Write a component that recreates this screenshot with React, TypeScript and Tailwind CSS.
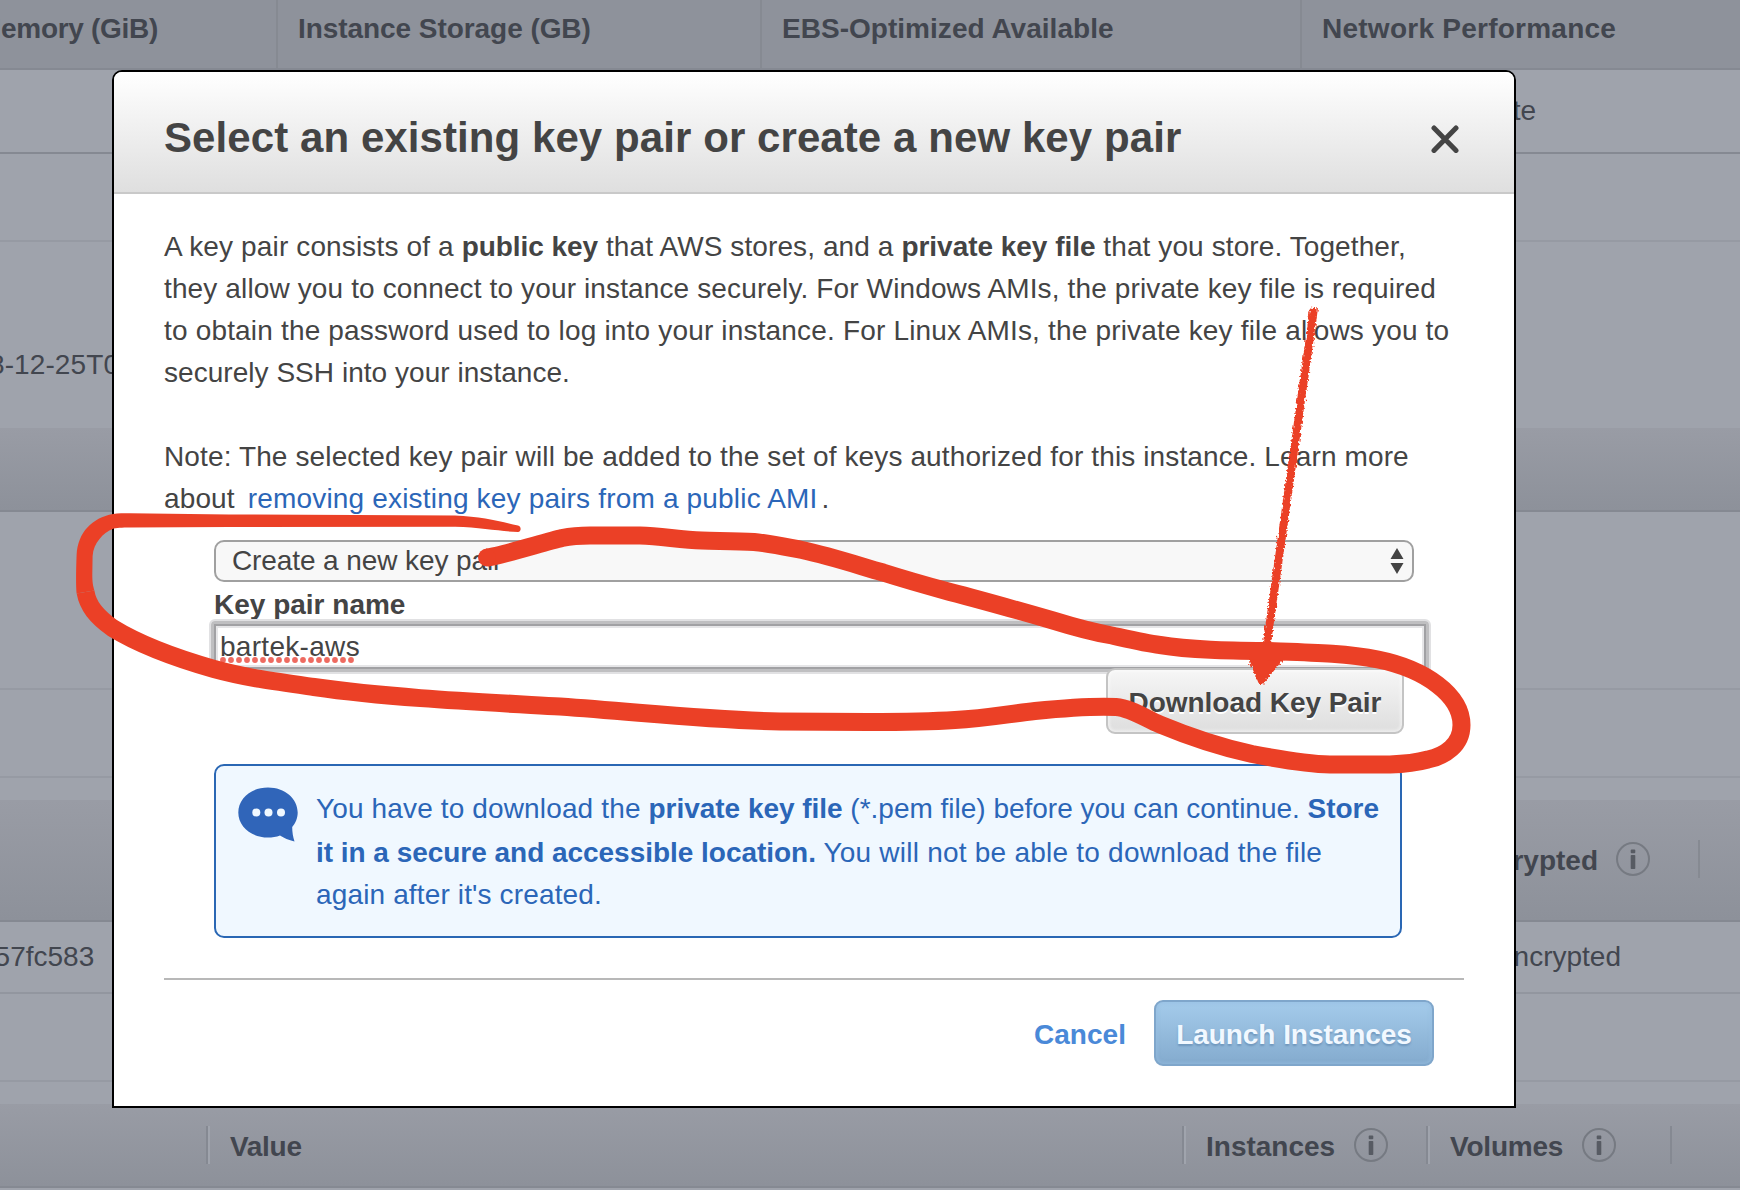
import type { ReactNode } from "react";

function InfoIcon() {
  return (
    <svg viewBox="0 0 36 36" className="h-9 w-9 shrink-0">
      <circle cx="18" cy="18" r="16" fill="none" stroke="#767a82" strokeWidth="2" />
      <rect x="15.7" y="8.5" width="4.6" height="3.8" rx="1" fill="#575b63" />
      <rect x="15.7" y="14" width="4.6" height="14" rx="0.8" fill="#575b63" />
    </svg>
  );
}

function Band({ className, children }: { className: string; children?: ReactNode }) {
  return (
    <div
      className={`flex shrink-0 border-b-2 border-[#858992] bg-linear-to-b from-[#999ca5] to-[#8d919a] font-bold ${className}`}
    >
      {children}
    </div>
  );
}

function Row({ className, children }: { className: string; children?: ReactNode }) {
  return <div className={`flex shrink-0 justify-between border-b-2 ${className}`}>{children}</div>;
}

function ReviewPage() {
  return (
    <div className="flex h-full flex-col whitespace-pre bg-[#9fa3ac] text-[#42464f]">
      <div className="flex h-[70px] shrink-0 border-b-2 border-[#858992] bg-[#8e929b] font-bold leading-[58px]">
        <div className="w-[278px] border-r-2 border-[#868a92]">
          <span className="-ml-[22px] tracking-[-0.3px]">Memory (GiB)</span>
        </div>
        <div className="w-[484px] border-r-2 border-[#868a92] pl-5 tracking-[-0.06px]">Instance Storage (GB)</div>
        <div className="w-[540px] border-r-2 border-[#868a92] pl-5 tracking-[0.03px]">EBS-Optimized Available</div>
        <div className="pl-5 tracking-[0.25px]">Network Performance</div>
      </div>
      <Row className="h-[84px] border-[#858992] leading-[81px]">
        <span />
        <span className="pr-[204px]">Moderate</span>
      </Row>
      <Row className="h-[88px] border-[#969aa3]" />
      <div className="h-[186px] shrink-0 pt-[103px] leading-[40px]">
        <span className="-ml-[11px] tracking-[0.1px]">8-12-25T0</span>
      </div>
      <Band className="h-[84px]" />
      <Row className="h-[178px] border-[#969aa3]" />
      <Row className="h-[88px] border-[#969aa3]" />
      <div className="h-[22px] shrink-0" />
      <Band className="h-[122px] items-center justify-end pb-[3px]">
        <span className="pt-1">Encrypted</span>
        <div className="ml-[17px] mr-[47px]">
          <InfoIcon />
        </div>
        <div className="mr-10 h-[38px] w-[2px] bg-[#868a92]" />
      </Band>
      <Row className="h-[72px] border-[#92969f] leading-[69px]">
        <span className="-ml-[21px]">557fc583</span>
        <span className="pr-[119px]">Not Encrypted</span>
      </Row>
      <Row className="h-[88px] border-[#969aa3]" />
      <div className="h-[22px] shrink-0" />
      <Band className="h-[84px] items-center pl-[206px]">
        <div className="h-[38px] w-1 border-l-2 border-r-2 border-l-[#858992] border-r-[#a0a4ad]" />
        <span className="w-[972px] pl-5 pt-[3px] tracking-[-0.3px]">Value</span>
        <div className="h-[38px] w-1 border-l-2 border-r-2 border-l-[#858992] border-r-[#a0a4ad]" />
        <div className="flex w-[240px] items-center pl-5">
          <span className="w-[147px] pt-[3px] tracking-[0px]">Instances</span>
          <InfoIcon />
        </div>
        <div className="h-[38px] w-1 border-l-2 border-r-2 border-l-[#858992] border-r-[#a0a4ad]" />
        <div className="flex w-[240px] items-center pl-5">
          <span className="w-[131px] pt-[3px] tracking-[-0.2px]">Volumes</span>
          <InfoIcon />
        </div>
        <div className="h-[38px] w-[2px] bg-[#858992]" />
      </Band>
    </div>
  );
}

function SpellingDots() {
  return (
    <svg viewBox="0 0 136 6" className="absolute left-0 top-[29px] h-[6px] w-[136px]">
      {Array.from({ length: 17 }, (_, i) => (
        <circle key={i} cx={3 + i * 8} cy="3" r="2.9" fill="#ee6a60" />
      ))}
    </svg>
  );
}

function KeyPairDialog() {
  return (
    <div className="absolute left-[112px] top-[70px] flex h-[1038px] w-[1404px] flex-col overflow-hidden whitespace-pre rounded-t-[10px] border-2 border-black bg-white text-[#444444]">
      <div className="flex h-[122px] shrink-0 items-center justify-between border-b-2 border-[#c9c9c9] bg-linear-to-b from-white to-[#dfdfdf] pl-[50px] pr-[55px]">
        <h1 className="pt-[11px] text-[42px] font-bold leading-[48px] tracking-[0.08px]">
          Select an existing key pair or create a new key pair
        </h1>
        <svg viewBox="0 0 28 28" className="mt-[53px] h-7 w-7 self-start">
          <path d="M3 3L25 25.5M25 3L3 25.5" stroke="#444444" strokeWidth="5" strokeLinecap="round" />
        </svg>
      </div>
      <div className="flex flex-col pl-[50px] pr-[50px] pt-8">
        <p className="h-[168px] leading-[42px] tracking-[0.1px]">
          <span className="tracking-[0.14px]">A key pair consists of a </span>
          <b className="tracking-[-0.05px]">public key</b> that AWS stores, and a{" "}
          <b className="tracking-[-0.03px]">private key file</b> that you store. Together,{"\n"}
          <span className="tracking-[0.13px]">
            they allow you to connect to your instance securely. For Windows AMIs, the private key file is required
          </span>
          {"\n"}
          <span className="tracking-[0.175px]">
            to obtain the password used to log into your instance. For Linux AMIs, the private key file allows you to
          </span>
          {"\n"}
          <span className="tracking-[0.04px]">securely SSH into your instance.</span>
        </p>
        <p className="mt-[42px] h-[84px] leading-[42px] tracking-[0.125px]">
          Note: The selected key pair will be added to the set of keys authorized for this instance. Learn more{"\n"}
          about<a className="ml-[13px] mr-1 tracking-[0.18px] text-[#2b66b8]">removing existing key pairs from a public AMI</a>.
        </p>
        <div className="flex flex-col pl-[50px] pt-5">
          <div className="flex h-[42px] w-[1200px] items-center justify-between rounded-[10px] border-2 border-[#a0a0a0] bg-[#f8f8f8] pl-4 pr-2">
            <span className="tracking-[-0.1px]">Create a new key pair</span>
            <svg viewBox="0 0 14 26" className="h-[26px] w-[14px]">
              <path d="M7 0L13.5 11H0.5ZM7 26L13.5 15H0.5Z" fill="#444444" />
            </svg>
          </div>
          <label className="h-[37px] pt-[5px] font-bold leading-[36px]">Key pair name</label>
          <div className="-ml-[5px] h-[55px] w-[1222px] rounded-[6px] border-2 border-[#e1e1e3] bg-white">
            <div className="h-[51px] rounded-[4px] border-[4px] border-[#bfbfc1]">
              <div className="-m-px h-[45px] border-2 border-[#a1a1a4]">
                <div className="h-[41px] border-2 border-[#e6e6e8] pl-[2px]">
                  <span className="relative block leading-[37px] tracking-[0.3px]">
                    bartek-aws
                    <SpellingDots />
                  </span>
                </div>
              </div>
            </div>
          </div>
          <button className="relative -mt-[6px] ml-[892px] h-[66px] w-[298px] rounded-[9px] border-2 border-[#c4c4c4] bg-linear-to-b from-[#f6f6f6] to-[#dedede] pt-[3px] text-center font-bold tracking-[-0.05px] shadow-[inset_0_0_3px_2px_rgba(255,255,255,0.45)] [text-shadow:0_2px_0_#ffffff]">
            Download Key Pair
          </button>
          <div className="mt-[30px] flex h-[174px] w-[1188px] rounded-[10px] border-2 border-[#2a67b4] bg-[#f0f8ff] pl-[22px] pt-[21px] text-[#2b66b8]">
            <svg viewBox="0 0 60 56" className="h-14 w-[60px]">
              <path
                d="M30 0.5C46.8 0.5 59.7 11.5 59.7 25.5C59.7 31 57.5 36.5 54.2 40C54.2 45 55 50 56.5 54.5C50.5 53 46 51 42 48.5C38.5 50 34 50.5 30 50.5C13.2 50.5 0.3 39.5 0.3 25.5C0.3 11.5 13.2 0.5 30 0.5Z"
                fill="#3065b9"
              />
              <circle cx="18.3" cy="25.5" r="4" fill="#f0f8ff" />
              <circle cx="30.5" cy="25.5" r="4" fill="#f0f8ff" />
              <circle cx="43" cy="25.5" r="4" fill="#f0f8ff" />
            </svg>
            <div className="pl-[18px] pt-px leading-[42px] tracking-[0.14px]">
              <p className="h-[44px]">
                You have to download the <b className="tracking-[-0.03px]">private key file</b>
                <span className="tracking-[-0.01px]"> (*.pem file) before you can continue. </span>
                <b className="tracking-[-0.05px]">Store</b>
              </p>
              <p>
                <b className="tracking-[-0.03px]">it in a secure and accessible location.</b>
                <span className="tracking-[0.23px]"> You will not be able to download the file</span>
              </p>
              <p>again after it's created.</p>
            </div>
          </div>
        </div>
        <div className="mt-10 flex items-start justify-end border-t-2 border-[#b8b8b8] pr-[30px] pt-5 font-bold">
          <a className="mr-7 mt-[17px] tracking-[0.05px] text-[#4a89d8]">Cancel</a>
          <button className="h-[66px] w-[280px] rounded-[9px] border-2 border-[#7fa6cb] bg-linear-to-b from-[#a4cbeb] to-[#84abce] pt-[3px] tracking-[-0.05px] text-[#f1f8ff] shadow-[inset_0_0_3px_2px_rgba(150,190,225,0.5)] [text-shadow:0_2px_2px_rgba(90,130,170,0.6)]">
            Launch Instances
          </button>
        </div>
      </div>
    </div>
  );
}

function Annotations() {
  return (
    <svg viewBox="0 0 1740 1190" className="pointer-events-none absolute inset-0 h-full w-full">
      <defs>
        <filter id="chalk" x="1200" y="280" width="160" height="430" filterUnits="userSpaceOnUse">
          <feTurbulence type="fractalNoise" baseFrequency="0.5" numOctaves="3" seed="4" result="noise" />
          <feDisplacementMap in="SourceGraphic" in2="noise" scale="6" xChannelSelector="R" yChannelSelector="G" />
        </filter>
      </defs>
      <g filter="url(#chalk)">
        <path d="M1314 308L1266 650" stroke="#eb4026" strokeWidth="8" />
        <path d="M1247 656L1286 656L1263 684L1259 684Z" fill="#eb4026" />
      </g>
      <path
        d="M487 557.5C500 556 545 542 562 538C572 536 580 535.5 590 535.5L640 535.5C662 536 680 540 702 540.5C720 541 738 541 754 542C770 543.5 786 547 802 550C830 556 857 565 883 572.5C905 579.5 928 586 950 592C985 601 1020 611 1053 620.5C1074 627 1092 632 1112 635.5C1128 639 1145 643 1160 645C1190 650 1230 650.5 1267 651C1310 652.5 1345 653 1378 659.5C1425 669 1461.5 695 1461.5 725C1461.5 745 1445 756 1428 759.5C1415 763 1404 764 1390 764.5L1330 764.5C1305 764 1278 759 1252 754C1215 746 1190 737 1160 724.5C1145 718 1130 708 1116 707C1095 706 1065 708 1035 711C1008 714 985 718.5 955 720C925 722 900 722 868 722L780 721.5C710 720 650 713 560 706.5C480 702 390 698 314 687C278 682 247 678 214 669C172 657 140 645 112.5 628C96 616 88 606 85.5 592"
        fill="none"
        stroke="#eb4026"
        strokeWidth="18"
        strokeLinejoin="round"
      />
      <circle cx="487" cy="557.5" r="9" fill="#eb4026" />
      <path
        d="M76.6 593.6C75.8 586 76 570 76.6 555C78 532 92 518 113 514C118 513.2 124 513.2 130 513.2L229 514.5L455 515.5C482 516.5 500 521.5 518 525.5C521.500 526.5 521.5 531.5 518 532C500 531.5 482 527.5 455 526.8L229 527L130 527.5C122 527.6 116 527.6 112.500 529C103 533 93.500 543 92.600 556L92.300 575C92.300 582 93 586 94.400 590.400Z"
        fill="#eb4026"
      />
    </svg>
  );
}

export default function App() {
  return (
    <div className="relative h-[1190px] w-[1740px] overflow-hidden font-['Liberation_Sans',Arial,sans-serif] text-[28px] leading-[36px]">
      <ReviewPage />
      <KeyPairDialog />
      <Annotations />
    </div>
  );
}
